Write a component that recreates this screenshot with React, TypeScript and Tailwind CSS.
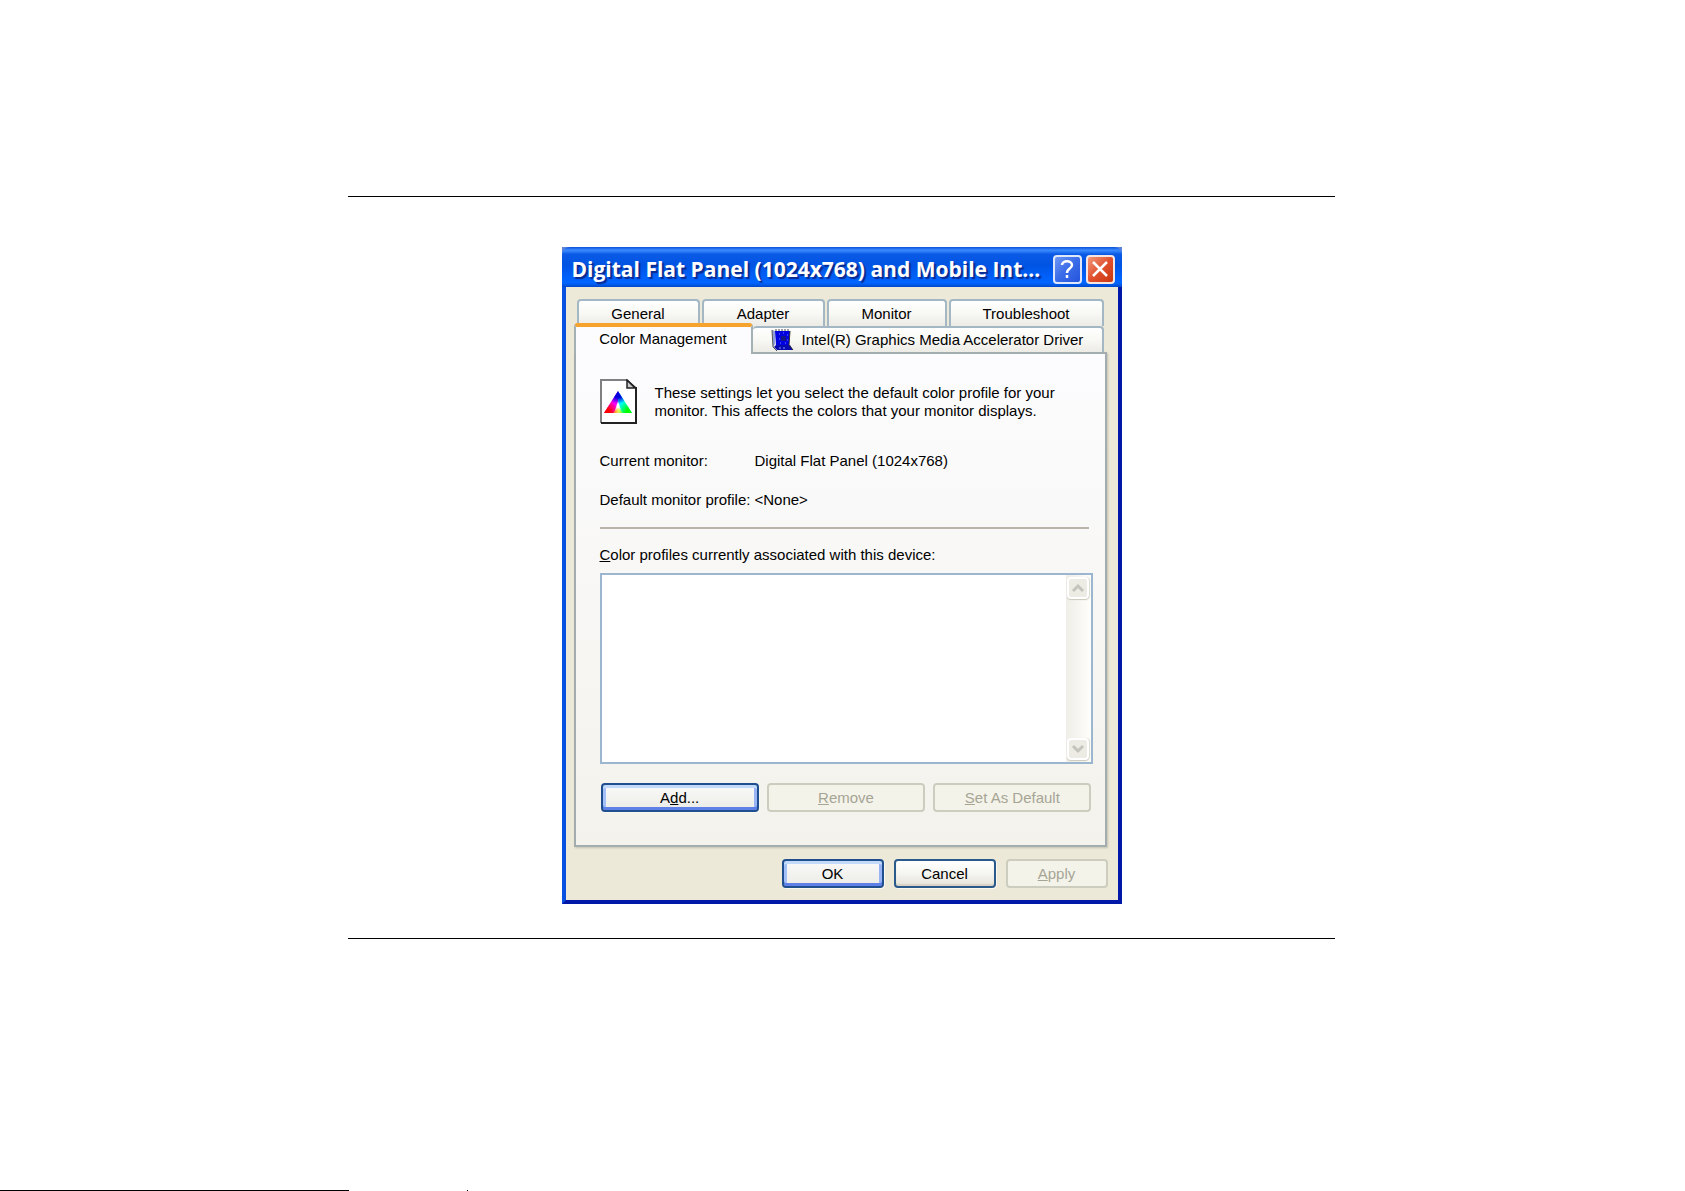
import type { ReactNode } from "react";

const tabBase =
  "rounded-t border-2 border-b-0 border-[#a3b8c4] bg-gradient-to-b from-white via-[#f8f8f4] to-[#ecebe6] text-center";

function Tab({ className, children }: { className: string; children: ReactNode }) {
  return (
    <button type="button" role="tab" aria-selected={false} className={`${tabBase} ${className}`}>
      {children}
    </button>
  );
}

const buttonTones = {
  normal:
    "border-[#2a5a8c] bg-gradient-to-b from-white via-[#f5f5f1] to-[#e4e2da] text-black shadow-[inset_0_-2px_1px_#d6d2c6,1px_1px_0_#f8f7f0]",
  primary:
    "border-[#1f4f8f] bg-gradient-to-b from-[#fafafa] to-[#ebebe6] text-black shadow-[inset_0_3px_0_#c3dafb,inset_0_-3px_0_#5f80e6,inset_3px_0_0_#a3c0f8,inset_-3px_0_0_#98b4f5,1px_1px_0_#f8f7f0]",
  disabled: "border-[#cdcdbf] bg-[#f4f3ea] text-[#a6a595]",
};

function XpButton({
  tone = "normal",
  className,
  children,
}: {
  tone?: keyof typeof buttonTones;
  className: string;
  children: ReactNode;
}) {
  return (
    <button
      type="button"
      disabled={tone === "disabled"}
      className={`flex h-[29px] items-center justify-center rounded border-2 ${buttonTones[tone]} ${className}`}
    >
      <span>{children}</span>
    </button>
  );
}

function ScrollArrow({ down = false }: { down?: boolean }) {
  return (
    <button
      type="button"
      disabled
      aria-label={down ? "Scroll down" : "Scroll up"}
      className="flex h-[22px] w-[22px] items-center justify-center rounded-sm border-2 border-white bg-[#ecebe4] shadow-[0_1px_1px_#c9c8ba,1px_0_1px_#dddccf]"
    >
      <svg width="14" height="10" viewBox="0 0 14 10" fill="none" stroke="#c5c4bb" strokeWidth="3">
        <path d={down ? "M2 2l5 5 5-5" : "M2 8l5-5 5 5"} />
      </svg>
    </button>
  );
}

function DriverIcon() {
  return (
    <svg width="23" height="23" viewBox="0 0 23 23" aria-hidden="true">
      <path d="M1 1l3 1v13l-2 3z" fill="#8fa0d8" />
      <path d="M1 1l1 17 4 4" fill="none" stroke="#555" />
      <path d="M4 2h15l-1 15H5z" fill="#0000e0" />
      <path d="M3 18l2-2h14l3 5H6z" fill="#0808b0" />
      <path d="M4 1h15" stroke="#444" strokeDasharray="2 1" />
      <path d="M19 2l-1 14 4 5" fill="none" stroke="#333" />
      <path d="M10 7h5v5h-5z" fill="#15158a" />
      <path d="M8 5h1M12 4h1M16 6h1M8 10h1M16 11h1M9 14h1M14 14h1" stroke="#6f8cff" />
      <path d="M8 19h8" stroke="#7f9cff" strokeDasharray="2 2" />
    </svg>
  );
}

function ProfileIcon() {
  return (
    <svg width="37" height="45" viewBox="0 0 37 45" className="shrink-0" aria-hidden="true">
      <defs>
        <radialGradient id="red" gradientUnits="userSpaceOnUse" cx="5" cy="34" r="14">
          <stop offset="0.35" stopColor="#f00" />
          <stop offset="1" stopColor="#f00" stopOpacity="0" />
        </radialGradient>
        <radialGradient id="green" gradientUnits="userSpaceOnUse" cx="31" cy="34" r="14">
          <stop offset="0.35" stopColor="#0f0" />
          <stop offset="1" stopColor="#0f0" stopOpacity="0" />
        </radialGradient>
        <radialGradient id="blue" gradientUnits="userSpaceOnUse" cx="18" cy="12" r="13">
          <stop offset="0.5" stopColor="#00d" />
          <stop offset="1" stopColor="#00d" stopOpacity="0" />
        </radialGradient>
      </defs>
      <path d="M1 1h26l9 9v34H1z" fill="#fff" />
      <path d="M1 44V1h26" fill="none" stroke="#808080" strokeWidth="2" />
      <path d="M27 1v8h8z" fill="#c8c8c8" stroke="#222" strokeWidth="1.5" />
      <path d="M27 1l9 8" stroke="#222" strokeWidth="1.5" />
      <path d="M1 44h35V8" fill="none" stroke="#222" strokeWidth="2" />
      <path d="M18 12L4 34h14z" fill="#f0f" />
      <path d="M18 12l14 22H18z" fill="#0ff" />
      <path d="M18 22l4 12h-8z" fill="#fff" />
      <path d="M18 29l5 5H13z" fill="#ff6" />
      <path d="M18 12l14 22H4z" fill="url(#red)" />
      <path d="M18 12l14 22H4z" fill="url(#green)" />
      <path d="M18 12l14 22H4z" fill="url(#blue)" />
    </svg>
  );
}

function TitleBar() {
  return (
    <header className="flex h-10 items-center gap-1 rounded-t-lg bg-[linear-gradient(#0a50d8_0%,#3c8cff_8%,#0a5ae6_18%,#0054e3_45%,#0060fa_75%,#0066ff_90%,#0048c8_100%)] pt-1 pr-[7px] pl-[10px]">
      <h1 className="min-w-0 flex-1 whitespace-nowrap font-['Open_Sans',sans-serif] text-[21px] font-bold text-white [text-shadow:2px_2px_1px_#0a2a90]">
        Digital Flat Panel (1024x768) and Mobile Int...
      </h1>
      <button
        type="button"
        aria-label="Help"
        className="flex h-[29px] w-[29px] items-center justify-center rounded border-2 border-[#dfe8fb] bg-gradient-to-br from-[#6f96f5] via-[#3a6be8] to-[#2454dc]"
      >
        <svg width="18" height="20" viewBox="0 0 18 20" fill="none" stroke="#fff" strokeWidth="2.5">
          <path d="M4 6c0-5 10-5 10 0 0 4-5 3-5 8M9 16v3" />
        </svg>
      </button>
      <button
        type="button"
        aria-label="Close"
        className="flex h-[29px] w-[29px] items-center justify-center rounded border-2 border-[#f5e6e2] bg-gradient-to-br from-[#f0977a] via-[#e0502c] to-[#c8380f]"
      >
        <svg width="18" height="18" viewBox="0 0 18 18" fill="none" stroke="#fff" strokeWidth="2.5">
          <path d="M2 2l14 14M16 2L2 16" />
        </svg>
      </button>
    </header>
  );
}

function DisplayDialog() {
  return (
    <section className="mx-auto w-full max-w-[560px] bg-[#5a82d8] font-['Liberation_Sans',Arial,sans-serif] text-[15px] leading-[18px]">
      <TitleBar />
      <div className="border-4 border-t-0 border-r-[#0018a8] border-b-[#0018a8] border-l-[#0850e0] bg-[#ece9d8] pt-3 pr-[10px] pb-3 pl-2">
        <div role="tablist" className="pr-1">
          <div className="flex h-[27px] gap-[2px] pl-[3px]">
            <Tab className="w-[123px]">General</Tab>
            <Tab className="w-[123px]">Adapter</Tab>
            <Tab className="w-[120px]">Monitor</Tab>
            <Tab className="flex-1">Troubleshoot</Tab>
          </div>
          <div className="-mt-[3px] flex h-[29px] items-end">
            <button
              type="button"
              role="tab"
              aria-selected
              className="relative -mb-[2px] h-[31px] w-[179px] rounded-t border-x-2 border-t-4 border-x-[#a3b0b4] border-t-[#f5a32c] bg-[#fcfcfe] pb-1"
            >
              Color Management
            </button>
            <Tab className="flex h-[26px] flex-1 items-center justify-center gap-2 border-l-0">
              <DriverIcon />
              Intel(R) Graphics Media Accelerator Driver
            </Tab>
          </div>
        </div>

        <div
          role="tabpanel"
          className="mr-[1px] border-2 border-[#a3acae] bg-gradient-to-b from-[#fcfcfe] to-[#f3f2ec] pt-[25px] pr-3 pb-[33px] pl-6 shadow-[1px_1px_2px_#c4c1b0]"
        >
          <div className="flex items-center gap-[18px]">
            <ProfileIcon />
            <p>
              These settings let you select the default color profile for your
              <br />
              monitor. This affects the colors that your monitor displays.
            </p>
          </div>

          <dl className="mt-[28px] grid grid-cols-[155px_1fr] gap-y-[21px]">
            <dt className="whitespace-nowrap">Current monitor:</dt>
            <dd>Digital Flat Panel (1024x768)</dd>
            <dt className="whitespace-nowrap">Default monitor profile:</dt>
            <dd>&lt;None&gt;</dd>
          </dl>

          <hr className="mt-[18px] mr-1 border-t-2 border-[#b9b5aa]" />

          <label htmlFor="profiles" className="mt-[17px] block">
            <u>C</u>olor profiles currently associated with this device:
          </label>
          <div className="mt-[9px] flex h-[191px] border-2 border-[#9db6cf] bg-white">
            <select id="profiles" size={8} className="min-w-0 flex-1 appearance-none bg-white" />
            <div className="flex w-[25px] flex-col items-center justify-between bg-gradient-to-r from-[#efeee8] to-[#fefefb] py-[2px]">
              <ScrollArrow />
              <ScrollArrow down />
            </div>
          </div>

          <div className="mt-[19px] flex gap-2 px-[1px]">
            <XpButton tone="primary" className="flex-1">
              A<u>d</u>d...
            </XpButton>
            <XpButton tone="disabled" className="flex-1">
              <u>R</u>emove
            </XpButton>
            <XpButton tone="disabled" className="flex-1">
              <u>S</u>et As Default
            </XpButton>
          </div>
        </div>

        <div className="mt-3 flex justify-end gap-[10px]">
          <XpButton tone="primary" className="w-[102px]">
            OK
          </XpButton>
          <XpButton className="w-[102px]">Cancel</XpButton>
          <XpButton tone="disabled" className="w-[102px]">
            <u>A</u>pply
          </XpButton>
        </div>
      </div>
    </section>
  );
}

export default function App() {
  return (
    <div className="flex min-h-screen flex-col bg-white text-black">
      <div className="pt-[196px] pr-[2px]">
        <main className="mx-auto w-full max-w-[987px] border-y border-black pt-[50px] pb-[34px]">
          <DisplayDialog />
        </main>
      </div>
      <footer className="mt-auto flex h-px">
        <div className="w-[349px] bg-black" />
        <div className="ml-[118px] w-px bg-black" />
      </footer>
    </div>
  );
}
